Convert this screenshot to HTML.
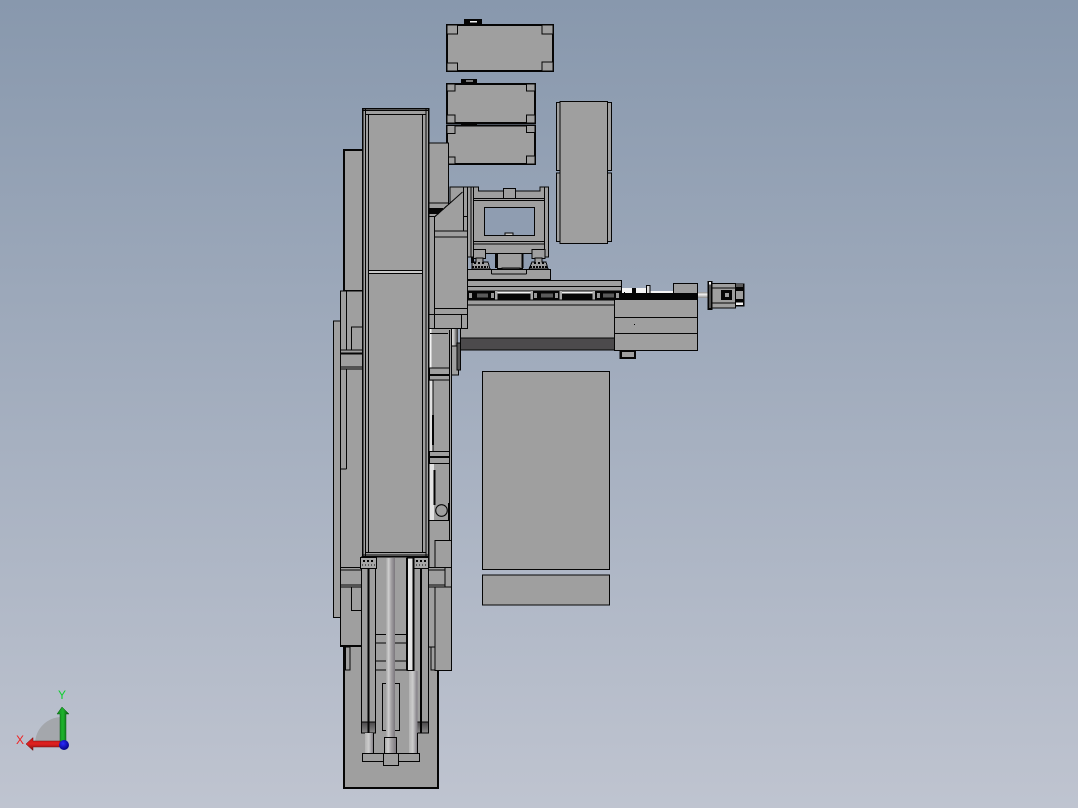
<!DOCTYPE html>
<html>
<head>
<meta charset="utf-8">
<style>
html,body{margin:0;padding:0;width:1078px;height:808px;overflow:hidden;background:#a0abbc}
svg{display:block}
.g rect,.g polygon,.g polyline,.g path,.g line,.g circle{stroke:#050505;stroke-width:1}
.g rect,.g polygon,.g circle{fill:#9f9f9f}
.g line,.g polyline{fill:none}
.g .t rect{stroke-width:2}
.k{fill:#050505!important;stroke:none!important}
.w{fill:#f4f4f4!important;stroke:none!important}
.b{fill:#8f9db1!important}
.d{fill:#4c4a4c!important}
.m{fill:#5a5a5a!important;stroke:none!important}
.n{stroke:none!important}
text{font-family:"Liberation Sans",sans-serif;font-size:12px}
</style>
</head>
<body>
<svg width="1078" height="808" viewBox="0 0 1078 808" xmlns="http://www.w3.org/2000/svg">
<defs>
<linearGradient id="bg" x1="0" y1="0" x2="0" y2="1"><stop offset="0" stop-color="#8898ad"/><stop offset="1" stop-color="#bfc4d0"/></linearGradient>
<linearGradient id="rod" x1="0" y1="0" x2="1" y2="0"><stop offset="0" stop-color="#a4a4a4"/><stop offset=".3" stop-color="#cfcfcf"/><stop offset=".55" stop-color="#a6a3a6"/><stop offset="1" stop-color="#7a767c"/></linearGradient>
<linearGradient id="rod2" x1="0" y1="0" x2="1" y2="0"><stop offset="0" stop-color="#b4b4b4"/><stop offset=".45" stop-color="#cccccc"/><stop offset="1" stop-color="#7c7880"/></linearGradient>
<linearGradient id="dk" x1="0" y1="0" x2="0" y2="1"><stop offset="0" stop-color="#4a484a"/><stop offset="1" stop-color="#8a8a8a"/></linearGradient>
<linearGradient id="shaft" x1="0" y1="0" x2="0" y2="1"><stop offset="0" stop-color="#8a8a8a"/><stop offset=".4" stop-color="#f2f2f2"/><stop offset="1" stop-color="#8a8a8a"/></linearGradient>
<linearGradient id="cyl" x1="0" y1="0" x2="1" y2="0"><stop offset="0" stop-color="#f0f0f0"/><stop offset=".5" stop-color="#bdbdbd"/><stop offset="1" stop-color="#2e2e2e"/></linearGradient>
<linearGradient id="gArrow" x1="0" y1="0" x2="1" y2="0"><stop offset="0" stop-color="#0c8a1c"/><stop offset=".5" stop-color="#1eb42c"/><stop offset="1" stop-color="#064d10"/></linearGradient>
<linearGradient id="rArrow" x1="0" y1="0" x2="0" y2="1"><stop offset="0" stop-color="#c81818"/><stop offset=".5" stop-color="#e02020"/><stop offset="1" stop-color="#701010"/></linearGradient>
<radialGradient id="ball" cx=".4" cy=".35" r=".7"><stop offset="0" stop-color="#2a2aff"/><stop offset="1" stop-color="#00007a"/></radialGradient>
</defs>
<rect width="1078" height="808" fill="url(#bg)"/>

<g class="g" shape-rendering="crispEdges">
<!-- top boxes -->
<rect class="k" x="464" y="19" width="18" height="5"/><rect class="w" x="470" y="21" width="7" height="1.5"/>
<rect class="k" x="461" y="79" width="16" height="4"/><rect class="w" x="466" y="80.5" width="7" height="1"/>
<rect class="k" x="461" y="123" width="16" height="2"/>
<g class="t">
<rect x="447" y="25" width="106" height="46"/>
<rect x="447" y="84" width="88" height="39"/>
<rect x="447" y="125.5" width="88" height="38.5"/>
</g>
<rect x="447" y="25" width="10.5" height="9"/><rect x="542" y="25" width="11" height="9"/><rect x="447" y="63" width="10.5" height="8"/><rect x="542" y="62" width="11" height="9"/>
<rect x="447" y="84" width="8" height="7"/><rect x="526.5" y="84" width="8.5" height="7"/><rect x="447" y="115" width="8" height="8"/><rect x="526.5" y="115" width="8.5" height="8"/>
<rect x="447" y="125.5" width="8" height="8"/><rect x="526.5" y="125.5" width="8.5" height="7"/><rect x="447" y="157" width="8" height="7"/><rect x="526.5" y="156" width="8.5" height="8"/>

<!-- right tall -->
<rect x="556.5" y="102.5" width="3.5" height="68"/><rect x="556.5" y="173" width="3.5" height="68.5"/>
<rect x="607.5" y="102.5" width="4" height="68"/><rect x="607.5" y="173" width="4" height="68.5"/>
<rect x="560" y="101.5" width="47.5" height="142"/>

<!-- large lower rectangles -->
<rect x="482.5" y="371.5" width="127" height="198"/>
<rect x="482.5" y="575" width="127" height="30"/>

<!-- bottom plate and fill behind rods -->
<rect x="344" y="646" width="94" height="142" style="stroke-width:2"/>
<rect class="n" x="362" y="557" width="67" height="91"/>

<!-- left plates -->
<rect x="333.5" y="321" width="7" height="296.5"/>
<rect x="344" y="150" width="19" height="141" style="stroke-width:2"/>
<rect x="340.5" y="291" width="22" height="355.5"/>
<line x1="346.5" y1="291" x2="346.5" y2="469"/>
<line x1="340.5" y1="469" x2="346.5" y2="469"/>
<polyline points="351.5,350 351.5,327 362,327"/>
<rect x="340.5" y="350" width="22" height="19"/>
<line x1="340.5" y1="353.5" x2="362" y2="353.5" style="stroke-width:2"/>
<line x1="340.5" y1="367" x2="362" y2="367"/>
<rect x="340.5" y="567.5" width="22" height="19.5"/>
<line x1="340.5" y1="570" x2="362" y2="570"/>
<line x1="340.5" y1="585" x2="362" y2="585"/>
<polyline points="351.5,587 351.5,610.5 362,610.5"/>
<line x1="340.5" y1="646" x2="362" y2="646" style="stroke-width:2"/>
<rect x="345.5" y="647" width="4.5" height="23"/>

<!-- rods section -->
<rect x="361.5" y="557" width="14" height="176"/>
<rect x="414" y="557" width="14.5" height="176"/>
<rect x="361.5" y="722" width="14" height="11" style="fill:url(#dk)"/>
<rect x="414" y="722" width="14.5" height="11" style="fill:url(#dk)"/>
<line x1="368.5" y1="557" x2="368.5" y2="733" style="stroke-width:2"/>
<line x1="421" y1="557" x2="421" y2="733" style="stroke-width:2"/>
<rect x="360.5" y="557.5" width="16" height="11" style="fill:#a8a8a8"/>
<rect x="414" y="557.5" width="14.5" height="11" style="fill:#a8a8a8"/>
<line x1="363" y1="561" x2="375" y2="561" style="stroke-dasharray:2 2;stroke-width:2"/>
<line x1="416" y1="561" x2="428" y2="561" style="stroke-dasharray:2 2;stroke-width:2"/>
<line x1="362" y1="565" x2="375" y2="565" style="stroke-dasharray:1 2"/>
<line x1="416" y1="565" x2="428" y2="565" style="stroke-dasharray:1 2"/>
<line x1="375.5" y1="634.5" x2="407" y2="634.5"/>
<line x1="375.5" y1="643" x2="407" y2="643"/>
<line x1="375.5" y1="661" x2="407" y2="661"/>
<line x1="375.5" y1="670" x2="407" y2="670"/>
<rect x="382.5" y="683.5" width="17" height="47"/>
<rect class="n" x="386" y="558" width="9" height="180" style="fill:url(#rod)"/>
<rect x="407" y="558" width="6" height="112.5" style="fill:#e4e4e4"/>
<line x1="407" y1="558" x2="407" y2="670" style="stroke-width:2"/>
<rect class="n" x="409" y="671" width="8.5" height="82" style="fill:url(#rod2)"/>
<rect class="n" x="365" y="733" width="8.5" height="20" style="fill:url(#rod2)"/>
<line x1="373.5" y1="733" x2="373.5" y2="753"/>
<line x1="417.5" y1="733" x2="417.5" y2="753"/>
<rect x="384.5" y="737.5" width="12" height="16" style="fill:url(#rod)"/>
<rect x="362.5" y="753.5" width="57" height="8"/>
<rect x="383.5" y="753.5" width="15" height="12"/>

<!-- right of column -->
<rect class="n" x="450" y="328" width="8" height="19" style="fill:url(#cyl)"/>
<rect x="451.5" y="346" width="7" height="29"/>
<rect x="457" y="343" width="3.5" height="27" style="fill:#555"/>
<rect x="429" y="328" width="22.5" height="240"/>
<rect class="w" x="429.5" y="329" width="2" height="39"/>
<rect class="n" x="429.5" y="381" width="3" height="70" style="fill:#e2e2e2"/>
<rect class="n" x="429.5" y="464" width="4.5" height="56" style="fill:#e2e2e2"/>
<line x1="433" y1="380" x2="433" y2="451"/>
<line x1="433" y1="415" x2="433" y2="445" style="stroke-width:2"/>
<line x1="434.5" y1="470" x2="434.5" y2="505" style="stroke-width:2"/>
<line x1="449.5" y1="330" x2="449.5" y2="540"/>
<line x1="430" y1="333.5" x2="448" y2="333.5"/>
<rect x="429.5" y="368" width="20" height="12"/>
<line x1="429.5" y1="375" x2="449.5" y2="375" style="stroke-width:2"/>
<rect x="429.5" y="451.5" width="20" height="12"/>
<line x1="429.5" y1="457" x2="449.5" y2="457" style="stroke-width:2"/>
<polyline points="429,520.5 448.5,520.5 448.5,503"/>
<rect x="435" y="540.5" width="16.5" height="27"/>
<rect x="428.5" y="567.5" width="16.5" height="19.5"/>
<line x1="428.5" y1="570" x2="445" y2="570"/>
<line x1="428.5" y1="585" x2="445" y2="585"/>
<rect x="445" y="567.5" width="6.5" height="19.5"/>
<rect x="428.5" y="587" width="6.5" height="60"/>
<rect x="431" y="647" width="4" height="23"/>
<rect x="435" y="587" width="16.5" height="83.5"/>

<!-- back plate -->
<rect x="428.5" y="143" width="20" height="74"/>
<line x1="429" y1="203" x2="448" y2="203"/>
<rect class="k" x="429" y="208" width="14" height="6"/>

<!-- bracket -->
<polygon points="463.5,187 478.5,187 478.5,191 540,191 540,187 548.5,187 548.5,257 463.5,257"/>
<line x1="467.5" y1="187" x2="467.5" y2="257"/>
<line x1="471" y1="187" x2="471" y2="257"/>
<line x1="473.5" y1="187" x2="473.5" y2="257"/>
<line x1="544.5" y1="187" x2="544.5" y2="257"/>
<rect x="503.5" y="188.5" width="12" height="10"/>
<line x1="473.5" y1="198.5" x2="544.5" y2="198.5"/>
<line x1="473.5" y1="200.5" x2="544.5" y2="200.5"/>
<rect class="b" x="484.5" y="207.5" width="50" height="28"/>
<rect x="505" y="233" width="8" height="2.5" style="fill:#c8c8c8"/>
<line x1="473.5" y1="241.5" x2="544.5" y2="241.5"/>
<line x1="473.5" y1="244" x2="544.5" y2="244"/>
<rect class="b n" x="474" y="254" width="70" height="15"/>
<line x1="473.5" y1="253.5" x2="544.5" y2="253.5"/>
<rect x="497.5" y="253.5" width="25" height="15"/>
<line x1="496" y1="254" x2="496" y2="268" style="stroke-width:2"/>
<line x1="522.5" y1="254" x2="522.5" y2="268" style="stroke-width:2"/>
<rect x="502" y="268" width="18" height="2" style="fill:#555"/>
<!-- feet -->
<rect x="473.5" y="249.5" width="12" height="9"/>
<rect x="532" y="249.5" width="13" height="9"/>
<polygon points="476,258 483,258 483,262 488,262 490,269 472,269 472,262 476,262"/>
<polygon points="535,258 542,258 542,262 546,262 548,269 529,269 532,262 535,262"/>
<line x1="472" y1="267" x2="488" y2="267" style="stroke-dasharray:2 1;stroke-width:2"/>
<line x1="530" y1="267" x2="547" y2="267" style="stroke-dasharray:2 1;stroke-width:2"/>
<line x1="474" y1="263" x2="486" y2="263" style="stroke-dasharray:2 2;stroke-width:2"/>
<line x1="534" y1="263" x2="546" y2="263" style="stroke-dasharray:2 2;stroke-width:2"/>
<rect class="k" x="471" y="257" width="3" height="6"/>

<!-- base plates -->
<rect x="467.5" y="269.5" width="83" height="10"/>
<line x1="491.5" y1="270" x2="491.5" y2="274"/>
<line x1="526.5" y1="270" x2="526.5" y2="274"/>
<line x1="491.5" y1="274" x2="526.5" y2="274"/>

<!-- rail -->
<rect x="467.5" y="280.5" width="154" height="10.5"/>
<line x1="467.5" y1="286.5" x2="621" y2="286.5"/>
<rect class="k" x="467.5" y="291" width="157" height="9"/>
<rect class="w" x="497" y="291.5" width="34" height="2"/>
<rect class="w" x="562" y="291.5" width="31" height="2"/>
<rect class="m" x="477" y="293.5" width="11" height="4"/>
<rect class="m" x="541" y="293.5" width="12" height="4"/>
<rect class="m" x="603" y="293.5" width="11" height="4"/>
<rect class="n" x="469" y="293" width="3" height="5" style="fill:#999"/>
<rect class="n" x="491" y="293" width="3" height="5" style="fill:#999"/>
<rect class="n" x="534" y="293" width="3" height="5" style="fill:#999"/>
<rect class="n" x="555" y="293" width="3" height="5" style="fill:#999"/>
<rect class="n" x="597" y="293" width="3" height="5" style="fill:#999"/>
<rect class="n" x="616" y="293" width="3" height="5" style="fill:#999"/>
<rect class="n" x="495" y="291" width="2.5" height="9" style="fill:#aaa"/>
<rect class="n" x="530.5" y="291" width="2.5" height="9" style="fill:#aaa"/>
<rect class="n" x="559.5" y="291" width="2.5" height="9" style="fill:#aaa"/>
<rect class="n" x="592.5" y="291" width="2.5" height="9" style="fill:#aaa"/>

<!-- main body -->
<rect x="460.5" y="300" width="154" height="38"/>
<line x1="460.5" y1="305" x2="614" y2="305"/>
<rect class="d" x="460.5" y="338" width="154" height="12"/>

<!-- right section strip -->
<rect class="w" x="622" y="288" width="24" height="5"/>
<rect class="k" x="632" y="288" width="4" height="5"/>
<rect class="w" x="650" y="291" width="24" height="2"/>
<rect x="646.5" y="285.5" width="3.5" height="8" style="fill:#ddd"/>
<rect x="673.5" y="283.5" width="24" height="10"/>
<rect class="k" x="625" y="293" width="73" height="6"/>
<rect x="624" y="292" width="1" height="8" class="k"/>

<!-- motor block -->
<rect x="614.5" y="299.5" width="83" height="51"/>
<line x1="614.5" y1="317.5" x2="697" y2="317.5"/>
<line x1="614.5" y1="333.5" x2="697" y2="333.5"/>
<rect class="k" x="634" y="324" width="1" height="1"/>
<!-- connector -->
<rect class="k" x="619.5" y="350.5" width="16.5" height="8.5"/>
<rect class="n" x="622" y="352" width="12" height="5"/>

<!-- shaft -->
<rect class="n" x="698" y="292" width="10" height="6" style="fill:url(#shaft)"/>

<!-- end motor -->
<rect class="k" x="733" y="283.5" width="11.5" height="23"/>
<rect class="m" x="735" y="284" width="8" height="3"/>
<rect class="w" x="735" y="302.5" width="8" height="2.5"/>
<rect class="n" x="736" y="291" width="7" height="8"/>
<rect x="711.5" y="283.5" width="24" height="24.5"/>
<line x1="711.5" y1="288" x2="735" y2="288"/>
<line x1="711.5" y1="303" x2="735" y2="303"/>
<rect class="k" x="721" y="290" width="11" height="10"/>
<rect class="n" x="725" y="293" width="4" height="4"/>
<rect x="708.5" y="282" width="3" height="27" style="stroke-width:2"/>
<rect class="w" x="709" y="282" width="2" height="2.5"/>

<!-- adapter with triangle -->
<rect x="428.5" y="216.5" width="39" height="112"/>
<polygon points="450,187 463.5,187 463.5,231 434.5,231 434.5,217 450,203"/>
<line x1="434.5" y1="217" x2="434.5" y2="328"/>
<line x1="434.5" y1="231" x2="467.5" y2="231"/>
<line x1="434.5" y1="237" x2="467.5" y2="237"/>
<line x1="434.5" y1="308.5" x2="467.5" y2="308.5"/>
<line x1="428.5" y1="314.5" x2="467.5" y2="314.5"/>
<line x1="461.5" y1="314.5" x2="461.5" y2="328"/>
</g>
<line x1="434.5" y1="217" x2="462.5" y2="192" stroke="#050505" stroke-width="1"/>
<circle cx="441.5" cy="510.5" r="5.8" fill="#9f9f9f" stroke="#050505" stroke-width="1.1"/>

<!-- main column -->
<g class="g" shape-rendering="crispEdges">
<rect x="362.5" y="108.5" width="66" height="448" style="stroke-width:1.5"/>
<line x1="365.5" y1="109" x2="365.5" y2="556"/>
<line x1="368.5" y1="114.5" x2="368.5" y2="552.5"/>
<line x1="422.5" y1="114.5" x2="422.5" y2="552.5"/>
<line x1="426" y1="109" x2="426" y2="556"/>
<line x1="363" y1="110.5" x2="428" y2="110.5"/>
<line x1="365.5" y1="114.5" x2="426" y2="114.5"/>
<line x1="365.5" y1="552.5" x2="426" y2="552.5"/>
<line x1="363" y1="555" x2="428" y2="555"/>
<rect class="w" x="369" y="271.5" width="53" height="1"/>
<line x1="369" y1="270.5" x2="422" y2="270.5"/>
<line x1="369" y1="273.5" x2="422" y2="273.5"/>
</g>

<!-- triad -->
<path d="M62 744 L35 744 A27 27 0 0 1 62 717 Z" fill="#a4a7ac"/>
<path d="M62 707 L69 714 L66 714 L66 743 L60 743 L60 714 L57 714 Z" fill="url(#gArrow)" stroke="#0a5a14" stroke-width=".5"/>
<path d="M26 744 L33 737.5 L33 741 L60 741 L60 747 L33 747 L33 750.5 Z" fill="url(#rArrow)" stroke="#7a1010" stroke-width=".5"/>
<circle cx="64" cy="745" r="5" fill="url(#ball)"/>
<text x="58" y="699" fill="#10d030">Y</text>
<text x="16" y="744" fill="#f02020">X</text>
</svg>
</body>
</html>
